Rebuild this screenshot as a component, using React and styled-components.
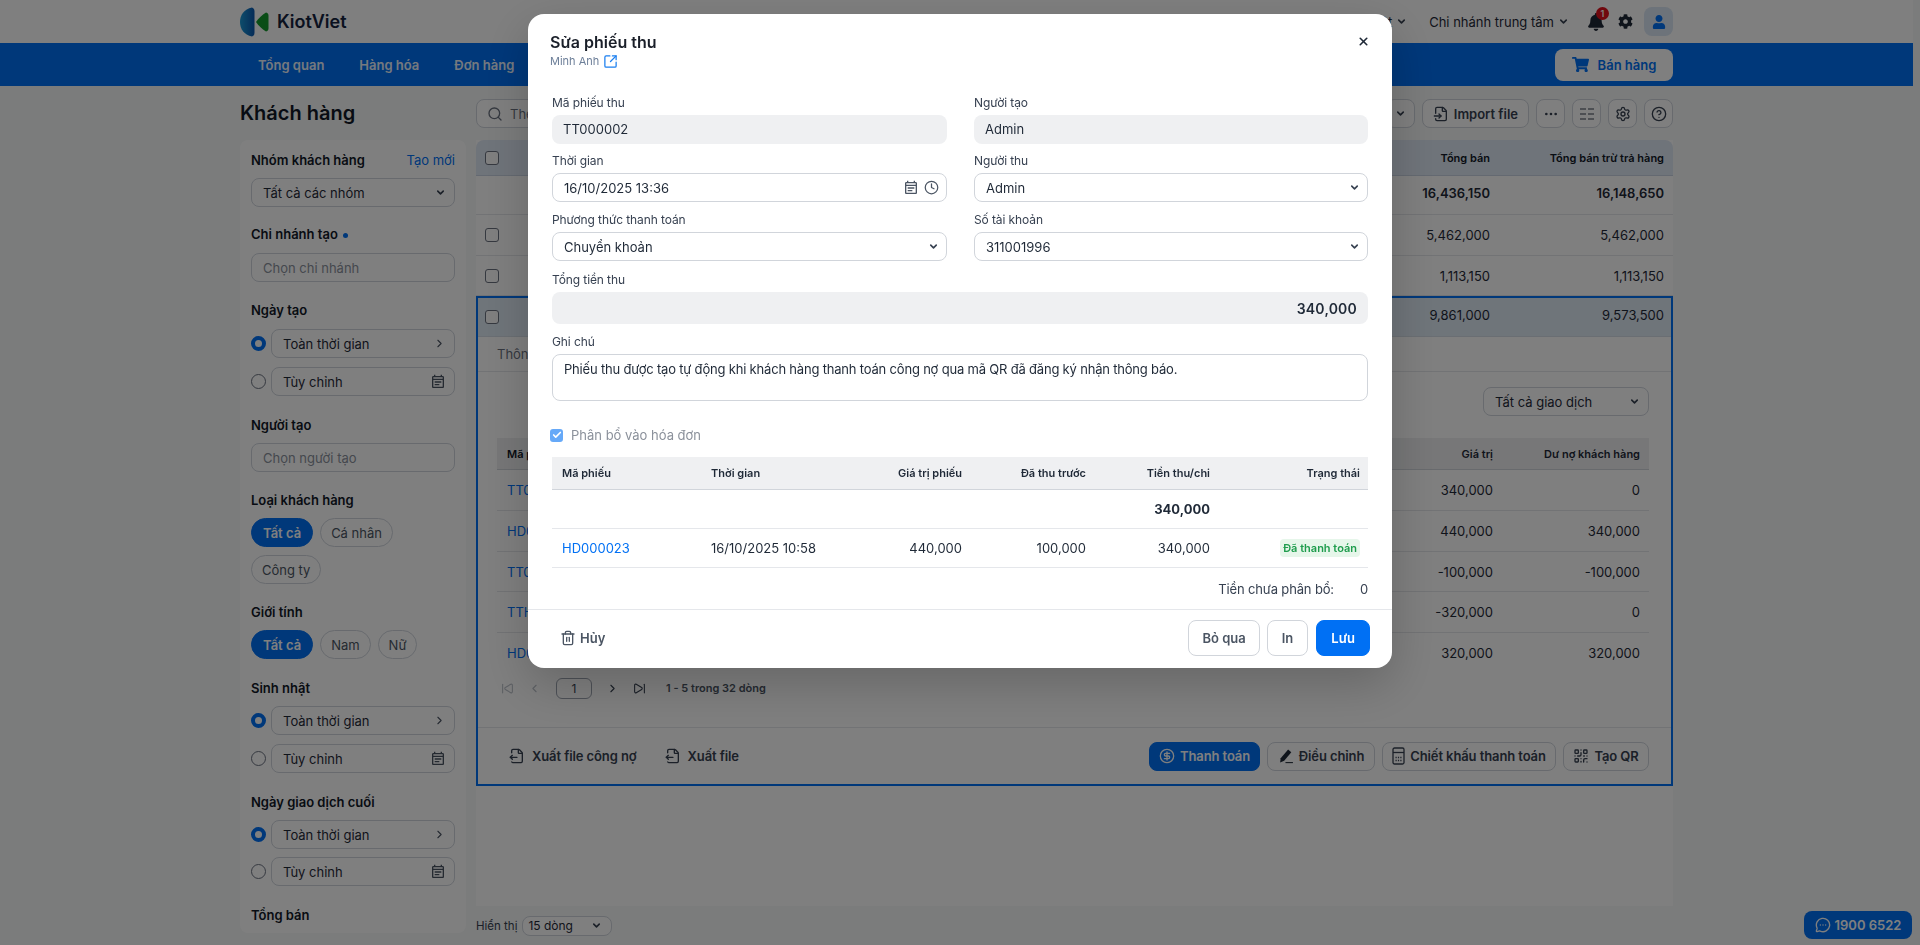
import React from 'react';
import styled, { createGlobalStyle } from 'styled-components';
import {
  Search, ChevronDown, ChevronRight, ChevronLeft, X, SquareArrowOutUpRight, Trash2, FileInput, FileOutput,
  Ellipsis, Settings, CircleHelp, CircleDollarSign, QrCode, MessageCircleMore, SkipBack, SkipForward, Check, Clock,
} from 'lucide-react';
import { FaBell, FaCog, FaUser, FaShoppingCart } from 'react-icons/fa';
import { MdOutlineEventNote } from 'react-icons/md';

const GlobalStyle = createGlobalStyle`
  html, body {
    margin: 0;
    height: 945px;
    overflow: hidden;
    background: #f6f8f8;
    font-family: Inter, "Noto Sans", sans-serif;
    font-size: 13px;
    color: #1f2937;
  }
  * { box-sizing: border-box; }
`;

const Page = styled.div`
  width: 1913px;
  height: 945px;
  overflow: hidden;
`;

// header
const Header = styled.header`
  height: 43px;
  background: #fff;
`;

const Inner = styled.div`
  width: 1433px;
  height: 100%;
  margin: 0 auto;
  display: flex;
  align-items: center;
`;

const Brand = styled.div`
  display: flex;
  align-items: center;
  gap: 8px;
  font-size: 18px;
  font-weight: 600;
  color: #14233f;
`;

const HeaderSide = styled.div`
  margin-left: auto;
  display: flex;
  align-items: center;
`;

const Peek = styled.span`
  width: 14px;
  height: 14px;
  border-radius: 50%;
  background: #0070f4;
  margin-right: 412px;
`;

const HeaderLink = styled.div`
  display: flex;
  align-items: center;
  gap: 4px;
  margin-right: ${(p) => p.$gap}px;
  font-size: 13px;
  color: #1f2937;
  white-space: nowrap;
`;

const BellWrap = styled.div`
  position: relative;
  display: flex;
  margin-right: 13px;
  color: #1f2937;
`;

const Badge = styled.span`
  position: absolute;
  top: -6px;
  right: -4px;
  width: 13px;
  height: 13px;
  border-radius: 50%;
  background: #e0101c;
  color: #fff;
  font-size: 9px;
  font-weight: 600;
  line-height: 13px;
  text-align: center;
`;

const UserButton = styled.div`
  width: 29px;
  height: 29px;
  margin-left: 11px;
  border-radius: 8px;
  background: #dbe6f4;
  color: #0070f4;
  display: flex;
  align-items: center;
  justify-content: center;
`;

// blue nav
const Nav = styled.nav`
  height: 43px;
  background: #0070f4;
`;

const NavItem = styled.div`
  margin-left: ${(p) => (p.$first ? 18 : 35)}px;
  font-size: 13px;
  font-weight: 600;
  color: #fff;
  opacity: 0.92;
`;

const SaleButton = styled.div`
  margin-left: auto;
  width: 118px;
  height: 32px;
  border-radius: 8px;
  background: #fff;
  color: #0070f4;
  font-size: 13px;
  font-weight: 600;
  display: flex;
  align-items: center;
  justify-content: center;
  gap: 9px;
`;

// page body
const Body = styled.div`
  width: 1433px;
  margin: 0 auto;
  display: grid;
  grid-template-columns: 226px 1197px;
  column-gap: 10px;
`;

const PageTitle = styled.h1`
  margin: 0;
  height: 54px;
  display: flex;
  align-items: center;
  font-size: 20px;
  font-weight: 600;
  color: #111827;
`;

const Sidebar = styled.aside`
  height: 793px;
  overflow: hidden;
  padding: 11px 11px 0;
  background: #fff;
  border-radius: 8px;
`;

const Section = styled.section`
  margin-bottom: ${(p) => p.$mb ?? 19}px;
`;

const SectionHead = styled.div`
  height: 18px;
  margin-bottom: ${(p) => p.$mb ?? 9}px;
  display: flex;
  align-items: center;
  justify-content: space-between;
  font-size: 13px;
  font-weight: 600;
  color: #111827;
`;

const Dot = styled.span`
  display: inline-block;
  width: 5px;
  height: 5px;
  margin-left: 5px;
  border-radius: 50%;
  background: #0070f4;
  vertical-align: middle;
`;

const NewLink = styled.span`
  font-weight: 400;
  color: #0070f4;
`;

const Field = styled.div`
  flex: 1;
  min-width: 0;
  height: 29px;
  padding: 0 8px 0 11px;
  border: 1px solid #d0d5dd;
  border-radius: 8px;
  background: ${(p) => p.$fill || '#fff'};
  display: flex;
  align-items: center;
  justify-content: space-between;
  font-size: 13px;
  color: ${(p) => (p.$muted ? '#8a919c' : '#1f2937')};
`;

const RadioRow = styled.div`
  display: flex;
  align-items: center;
  gap: 5px;
  margin-top: ${(p) => p.$next || 0}px;
`;

const Radio = styled.span`
  width: 15px;
  height: 15px;
  flex: none;
  border-radius: 50%;
  border: ${(p) => (p.$on ? '4px solid #0070f4' : '1px solid #6b7280')};
  background: #fff;
`;

const Chips = styled.div`
  display: flex;
  flex-wrap: wrap;
  gap: 8px 7px;
`;

const Chip = styled.span`
  height: 29px;
  padding: 0 ${(p) => (p.$on ? 11 : 10)}px;
  border-radius: 15px;
  border: 1px solid ${(p) => (p.$on ? '#0070f4' : '#d0d5dd')};
  background: ${(p) => (p.$on ? '#0070f4' : '#fff')};
  color: ${(p) => (p.$on ? '#fff' : '#4b5563')};
  font-weight: ${(p) => (p.$on ? 600 : 400)};
  display: flex;
  align-items: center;
`;

// main column
const Toolbar = styled.div`
  height: 54px;
  padding-top: 1px;
  display: flex;
  align-items: center;
  gap: 7px;
`;

const SearchBox = styled.div`
  flex: 1;
  height: 29px;
  padding: 0 10px;
  border: 1px solid #d0d5dd;
  border-radius: 8px;
  background: #fff;
  display: flex;
  align-items: center;
  gap: 7px;
  color: #6b7280;
`;

const ToolButton = styled.div`
  height: 29px;
  min-width: 29px;
  padding: 0 ${(p) => (p.$wide ? 10 : 0)}px;
  border: 1px solid #d0d5dd;
  border-radius: 8px;
  background: #fff;
  display: flex;
  align-items: center;
  justify-content: center;
  gap: 5px;
  font-weight: 600;
  color: #374151;
`;

const Panel = styled.main`
  height: 766px;
  background: #fff;
`;

const TableHead = styled.div`
  height: 36px;
  display: grid;
  grid-template-columns: 46px 1fr 170px 174px;
  align-items: center;
  padding-right: 9px;
  background: #dfe8f5;
  border-radius: 8px 8px 0 0;
  border-bottom: 1px solid #c9d3e2;
  font-size: 11px;
  font-weight: 600;
  color: #111827;
  text-align: right;
`;

const Row = styled.div`
  height: ${(p) => p.$h}px;
  display: grid;
  grid-template-columns: 46px 1fr 170px 174px;
  align-items: center;
  padding-right: 9px;
  padding-bottom: ${(p) => (p.$bold ? 4 : 0)}px;
  border-bottom: 1px solid #e5e7eb;
  text-align: right;
  font-weight: ${(p) => (p.$bold ? 600 : 400)};
`;

const SelectedWrap = styled.div`
  height: 490px;
  border: 2px solid #0070f4;
`;

const SelectedRow = styled.div`
  height: 39px;
  display: grid;
  grid-template-columns: 44px 1fr 170px 174px;
  align-items: center;
  padding-right: 7px;
  padding-bottom: 4px;
  background: #dfeaf5;
  border-bottom: 1px solid #d5dde6;
  text-align: right;
`;

const CheckBox = styled.span`
  justify-self: start;
  width: 14px;
  height: 14px;
  margin-left: ${(p) => p.$left}px;
  margin-top: ${(p) => p.$top || 0}px;
  border: 1px solid #6b7280;
  border-radius: 3px;
  background: #fff;
`;

const TabBar = styled.div`
  height: 35px;
  padding-left: 19px;
  display: flex;
  align-items: center;
  border-bottom: 1px solid #e5e7eb;
  color: #6b7280;
`;

const TabBody = styled.div`
  padding: 15px 22px 0 19px;
`;

const FilterRow = styled.div`
  display: flex;
  justify-content: flex-end;
  margin-bottom: 22px;
`;

const FilterSelect = styled(Field)`
  flex: none;
  width: 166px;
`;

const InnerRow = styled.div`
  height: ${(p) => p.$h}px;
  display: grid;
  grid-template-columns: 1fr 200px 147px;
  align-items: center;
  padding-left: 10px;
  padding-right: 9px;
  background: ${(p) => (p.$head ? '#eeeff1' : 'transparent')};
  border-bottom: 1px solid ${(p) => (p.$head ? '#d1d5db' : p.$last ? 'transparent' : '#e5e7eb')};
  font-size: ${(p) => (p.$head ? 11 : 13)}px;
  font-weight: ${(p) => (p.$head ? 600 : 400)};
  text-align: right;
`;

const CodeCell = styled.span`
  text-align: left;
  color: ${(p) => (p.$head ? '#111827' : '#0070f4')};
`;

const Pager = styled.div`
  height: 53px;
  padding-bottom: 25px;
  display: flex;
  align-items: center;
  color: #374151;
`;

const PagerIcon = styled.span`
  display: flex;
  margin-left: ${(p) => p.$left}px;
  color: ${(p) => (p.$off ? '#bcc1c9' : '#374151')};
`;

const PageBox = styled.span`
  width: 36px;
  height: 21px;
  margin-left: 15px;
  border: 1px solid #9ca3af;
  border-radius: 6px;
  display: flex;
  align-items: center;
  justify-content: center;
  font-size: 12px;
`;

const PagerInfo = styled.span`
  margin-left: 20px;
  font-size: 11px;
  font-weight: 600;
  color: #4b5563;
`;

const PanelFoot = styled.div`
  height: 57px;
  padding: 0 22px 0 31px;
  border-top: 1px solid #e5e7eb;
  display: flex;
  align-items: center;
  gap: 7px;
`;

const GhostAction = styled.div`
  display: flex;
  align-items: center;
  gap: 7px;
  margin-right: ${(p) => p.$gap || 0}px;
  font-weight: 600;
  color: #374151;
  letter-spacing: -0.1px;
`;

const FootButton = styled.div`
  width: ${(p) => p.$w}px;
  height: 29px;
  border-radius: 8px;
  border: 1px solid ${(p) => (p.$primary ? '#0070f4' : '#d0d5dd')};
  background: ${(p) => (p.$primary ? '#0070f4' : '#fff')};
  color: ${(p) => (p.$primary ? '#fff' : '#374151')};
  margin-left: ${(p) => (p.$push ? 'auto' : 0)};
  display: flex;
  align-items: center;
  justify-content: center;
  gap: 5px;
  font-weight: 600;
  letter-spacing: -0.1px;
  white-space: nowrap;
`;

const PageSize = styled.div`
  height: 39px;
  display: flex;
  align-items: center;
  gap: 5px;
  font-size: 11.5px;
  color: #374151;
`;

const SizeSelect = styled(Field)`
  flex: none;
  width: 90px;
  height: 20px;
  padding: 0 9px 0 5px;
  font-size: 12px;
`;

const Hotline = styled.div`
  position: fixed;
  left: 1804px;
  top: 911px;
  width: 108px;
  height: 28px;
  border-radius: 8px;
  background: #0070f4;
  color: #fff;
  font-weight: 600;
  display: flex;
  align-items: center;
  justify-content: center;
  gap: 4px;
`;

// modal
const Overlay = styled.div`
  position: fixed;
  inset: 0;
  padding-top: 14px;
  background: rgba(0, 0, 0, 0.5);
  display: flex;
  justify-content: center;
  align-items: flex-start;
`;

const Modal = styled.div`
  width: 864px;
  height: 654px;
  border-radius: 16px;
  background: #fff;
  box-shadow: 0 16px 48px rgba(0, 0, 0, 0.2);
`;

const ModalHead = styled.div`
  height: 81px;
  padding: 18px 22px 0 24px;
  display: flex;
  justify-content: space-between;
`;

const ModalTitle = styled.div`
  font-size: 16px;
  font-weight: 600;
  line-height: 20px;
  color: #1a1f29;
  margin-left: -2px;
`;

const ModalSub = styled.div`
  height: 16px;
  margin: 1px 0 0 -2px;
  display: flex;
  align-items: center;
  gap: 4px;
  font-size: 11px;
  color: #6d7f99;
`;

const CloseWrap = styled.div`
  margin-top: 3px;
  color: #1f2937;
`;

const ModalBody = styled.div`
  padding: 0 24px;
`;

const FormGrid = styled.div`
  display: grid;
  grid-template-columns: 395px 394px;
  column-gap: 27px;
`;

const FormGroup = styled.div`
  grid-column: ${(p) => (p.$full ? '1 / -1' : 'auto')};
  margin-bottom: ${(p) => p.$mb ?? 9}px;
`;

const Label = styled.label`
  display: block;
  height: 16px;
  margin-bottom: 4px;
  font-size: 12px;
  line-height: 16px;
  letter-spacing: -0.1px;
  color: #374151;
`;

const ReadOnly = styled.div`
  height: ${(p) => p.$h || 29}px;
  padding: 0 11px ${(p) => (p.$right ? 0 : 2)}px;
  border-radius: 8px;
  background: #eff0f2;
  display: flex;
  align-items: center;
  justify-content: ${(p) => (p.$right ? 'flex-end' : 'flex-start')};
  font-size: ${(p) => (p.$right ? 14 : 13)}px;
  font-weight: ${(p) => (p.$right ? 600 : 400)};
  letter-spacing: ${(p) => (p.$right ? 0.2 : 0)}px;
  color: #1f2937;
`;

const FormField = styled(Field)`
  border-color: #d1d5db;
  padding: 0 7px 0 11px;
`;

const IconPair = styled.span`
  display: flex;
  align-items: center;
  gap: 5px;
  color: #4b5563;
`;

const NoteBox = styled.div`
  height: 47px;
  padding: 5px 11px;
  border: 1px solid #d1d5db;
  border-radius: 8px;
  font-size: 13px;
  line-height: 18px;
  letter-spacing: -0.19px;
`;

const Allocate = styled.div`
  margin: 25px 0 13px -2px;
  height: 18px;
  display: flex;
  align-items: center;
  gap: 8px;
  color: #8b919b;
`;

const AllocateBox = styled.span`
  width: 13px;
  height: 13px;
  border-radius: 3px;
  background: #66a9f8;
  color: #fff;
  display: flex;
  align-items: center;
  justify-content: center;
`;

const AllocRow = styled.div`
  height: ${(p) => p.$h}px;
  display: grid;
  grid-template-columns: 149px 149px 120px 124px 124px 150px;
  align-items: center;
  background: ${(p) => (p.$head ? '#eff0f2' : 'transparent')};
  border-bottom: 1px solid ${(p) => (p.$head ? '#d1d5db' : '#e5e7eb')};
  font-size: ${(p) => (p.$head ? 11 : 13)}px;
  font-weight: ${(p) => (p.$head ? 600 : 400)};
`;

const AllocCell = styled.span`
  padding: ${(p) => (p.$right ? '0 8px 0 0' : '0 0 0 10px')};
  text-align: ${(p) => (p.$right ? 'right' : 'left')};
  color: ${(p) => (p.$link ? '#0070f4' : 'inherit')};
  font-weight: ${(p) => (p.$bold ? 700 : 'inherit')};
`;

const StatusBadge = styled.span`
  display: inline-block;
  height: 18px;
  padding: 0 3px;
  border-radius: 4px;
  background: #e6f6ea;
  color: #1f9d4d;
  font-size: 11px;
  font-weight: 600;
  line-height: 18px;
`;

const Remain = styled.div`
  height: 41px;
  display: flex;
  align-items: center;
  justify-content: flex-end;
  gap: 26px;
  letter-spacing: -0.15px;
  color: #374151;
`;

const ModalFoot = styled.div`
  height: 59px;
  padding: 0 22px 2px 32px;
  border-top: 1px solid #e5e7eb;
  display: flex;
  align-items: center;
  gap: 7px;
`;

const CancelLink = styled.div`
  margin-right: auto;
  display: flex;
  align-items: center;
  gap: 4px;
  font-weight: 600;
  color: #4b5563;
`;

const ModalButton = styled.div`
  height: 36px;
  padding: 0 ${(p) => p.$pad}px;
  margin-left: ${(p) => p.$ml || 0}px;
  border-radius: 8px;
  border: 1px solid ${(p) => (p.$primary ? '#0070f4' : '#d1d5db')};
  background: ${(p) => (p.$primary ? '#0070f4' : '#fff')};
  color: ${(p) => (p.$primary ? '#fff' : '#4b5563')};
  display: flex;
  align-items: center;
  font-weight: 600;
`;

const Logo = () => (
  <svg width="29" height="30" viewBox="0 0 29 30">
    <defs>
      <linearGradient id="lens" x1="0" y1="0" x2="1" y2="0">
        <stop offset="0" stopColor="#1b9ad6" />
        <stop offset="1" stopColor="#0b57b0" />
      </linearGradient>
    </defs>
    <path d="M12 0.5C4 2 0 8 0 15s4 13 12 14.500c2-1 2.500-2 2.500-4V4.500c0-2-.5-3-2.500-4z" fill="url(#lens)" />
    <path d="M16 15c2-3 6-7 10-9.500 2 .5 2.500 1.500 2.500 3.500v12c0 2-.5 3-2.500 3.500C22 22 18 18 16 15z" fill="#149a2d" />
  </svg>
);

const ColumnsIcon = () => (
  <svg width="16" height="14" viewBox="0 0 16 14" fill="none" stroke="#374151" strokeWidth="1.200">
    <path d="M1 2h6M9 2h6M1 7h6M9 7h6M1 12h6M9 12h6" />
  </svg>
);

const PenIcon = () => (
  <svg width="16" height="16" viewBox="0 0 15 15" fill="#1f2937">
    <path d="M2.500 9.500 9.500 1.500l3 2.500-6.700 8L2 13.500z" />
    <path d="M7 13.200h7v1H7z" />
  </svg>
);

const TallCalculator = () => (
  <svg width="13" height="18" viewBox="0 0 13 18" fill="none" stroke="#374151" strokeWidth="1.300">
    <rect x="1" y="1" width="11" height="16" rx="1.500" />
    <path d="M1 5.500h11" />
    <path d="M3.500 10.500h6M3.500 13.500h6" strokeDasharray="1.200 1.200" />
  </svg>
);

const CalIcon = () => <MdOutlineEventNote size={16} color="#4b5563" />;
const Caret = () => <ChevronDown size={11} strokeWidth={3.5} color="#374151" />;

const TimeChoice = ({ rowGap = 9 }) => (
  <>
    <RadioRow>
      <Radio $on />
      <Field>Toàn thời gian<ChevronRight size={13} color="#4b5563" /></Field>
    </RadioRow>
    <RadioRow $next={rowGap}>
      <Radio />
      <Field>Tùy chỉnh<CalIcon /></Field>
    </RadioRow>
  </>
);

const ledger = [
  { code: 'TT000002', value: '340,000', debt: '0', h: 41 },
  { code: 'HD000023', value: '440,000', debt: '340,000', h: 41 },
  { code: 'TT000001', value: '-100,000', debt: '-100,000', h: 40 },
  { code: 'TTHD000002', value: '-320,000', debt: '0', h: 41 },
  { code: 'HD000022', value: '320,000', debt: '320,000', h: 41, last: true },
];

export default function App() {
  return (
    <>
      <GlobalStyle />
      <Page>
        <Header>
          <Inner>
            <Brand><Logo />KiotViet</Brand>
            <HeaderSide>
              <Peek />
              <HeaderLink $gap={22}>Tiếng Việt<Caret /></HeaderLink>
              <HeaderLink $gap={18}>Chi nhánh trung tâm<Caret /></HeaderLink>
              <BellWrap><FaBell size={18} /><Badge>1</Badge></BellWrap>
              <FaCog size={15} color="#1f2937" />
              <UserButton><FaUser size={14} /></UserButton>
            </HeaderSide>
          </Inner>
        </Header>
        <Nav>
          <Inner>
            <NavItem $first>Tổng quan</NavItem>
            <NavItem>Hàng hóa</NavItem>
            <NavItem>Đơn hàng</NavItem>
            <SaleButton><FaShoppingCart size={17} />Bán hàng</SaleButton>
          </Inner>
        </Nav>
        <Body>
          <div>
            <PageTitle>Khách hàng</PageTitle>
            <Sidebar>
              <Section $mb={18}>
                <SectionHead>Nhóm khách hàng<NewLink>Tạo mới</NewLink></SectionHead>
                <Field>Tất cả các nhóm<Caret /></Field>
              </Section>
              <Section>
                <SectionHead $mb={10}><span>Chi nhánh tạo<Dot /></span></SectionHead>
                <Field $muted>Chọn chi nhánh</Field>
              </Section>
              <Section $mb={20}>
                <SectionHead $mb={10}>Ngày tạo</SectionHead>
                <TimeChoice />
              </Section>
              <Section>
                <SectionHead>Người tạo</SectionHead>
                <Field $muted>Chọn người tạo</Field>
              </Section>
              <Section>
                <SectionHead>Loại khách hàng</SectionHead>
                <Chips>
                  <Chip $on>Tất cả</Chip>
                  <Chip>Cá nhân</Chip>
                  <Chip>Công ty</Chip>
                </Chips>
              </Section>
              <Section $mb={20}>
                <SectionHead>Giới tính</SectionHead>
                <Chips>
                  <Chip $on>Tất cả</Chip>
                  <Chip>Nam</Chip>
                  <Chip>Nữ</Chip>
                </Chips>
              </Section>
              <Section $mb={20}>
                <SectionHead>Sinh nhật</SectionHead>
                <TimeChoice />
              </Section>
              <Section $mb={20}>
                <SectionHead>Ngày giao dịch cuối</SectionHead>
                <TimeChoice rowGap={8} />
              </Section>
              <Section>
                <SectionHead>Tổng bán</SectionHead>
              </Section>
            </Sidebar>
          </div>
          <div>
            <Toolbar>
              <SearchBox><Search size={16} />Theo mã</SearchBox>
              <ToolButton><Caret /></ToolButton>
              <ToolButton $wide><FileInput size={16} />Import file</ToolButton>
              <ToolButton><Ellipsis size={16} /></ToolButton>
              <ToolButton><ColumnsIcon /></ToolButton>
              <ToolButton><Settings size={16} /></ToolButton>
              <ToolButton><CircleHelp size={16} /></ToolButton>
            </Toolbar>
            <Panel>
              <TableHead>
                <CheckBox $left={9} />
                <span />
                <span>Tổng bán</span>
                <span>Tổng bán trừ trả hàng</span>
              </TableHead>
              <Row $h={39} $bold>
                <span />
                <span />
                <span>16,436,150</span>
                <span>16,148,650</span>
              </Row>
              <Row $h={41}>
                <CheckBox $left={9} />
                <span />
                <span>5,462,000</span>
                <span>5,462,000</span>
              </Row>
              <Row $h={40}>
                <CheckBox $left={9} />
                <span />
                <span>1,113,150</span>
                <span>1,113,150</span>
              </Row>
              <SelectedWrap>
                <SelectedRow>
                  <CheckBox $left={7} $top={4} />
                  <span />
                  <span>9,861,000</span>
                  <span>9,573,500</span>
                </SelectedRow>
                <TabBar>Thông tin</TabBar>
                <TabBody>
                  <FilterRow>
                    <FilterSelect>Tất cả giao dịch<Caret /></FilterSelect>
                  </FilterRow>
                  <InnerRow $h={32} $head>
                    <CodeCell $head>Mã phiếu</CodeCell>
                    <span>Giá trị</span>
                    <span>Dư nợ khách hàng</span>
                  </InnerRow>
                  {ledger.map((item) => (
                    <InnerRow key={item.code} $h={item.h} $last={item.last}>
                      <CodeCell>{item.code}</CodeCell>
                      <span>{item.value}</span>
                      <span>{item.debt}</span>
                    </InnerRow>
                  ))}
                  <Pager>
                    <PagerIcon $left={4} $off><SkipBack size={13} /></PagerIcon>
                    <PagerIcon $left={14} $off><ChevronLeft size={13} /></PagerIcon>
                    <PageBox>1</PageBox>
                    <PagerIcon $left={14}><ChevronRight size={13} /></PagerIcon>
                    <PagerIcon $left={14}><SkipForward size={13} /></PagerIcon>
                    <PagerInfo>1 - 5 trong 32 dòng</PagerInfo>
                  </Pager>
                </TabBody>
                <PanelFoot>
                  <GhostAction $gap={21}><FileOutput size={16} />Xuất file công nợ</GhostAction>
                  <GhostAction><FileOutput size={16} />Xuất file</GhostAction>
                  <FootButton $w={111} $primary $push><CircleDollarSign size={16} />Thanh toán</FootButton>
                  <FootButton $w={108}><PenIcon />Điều chỉnh</FootButton>
                  <FootButton $w={174}><TallCalculator />Chiết khấu thanh toán</FootButton>
                  <FootButton $w={86}><QrCode size={16} />Tạo QR</FootButton>
                </PanelFoot>
              </SelectedWrap>
            </Panel>
            <PageSize>
              Hiển thị
              <SizeSelect>15 dòng<Caret /></SizeSelect>
            </PageSize>
          </div>
        </Body>
      </Page>
      <Hotline><MessageCircleMore size={16} />1900 6522</Hotline>
      <Overlay>
        <Modal>
          <ModalHead>
            <div>
              <ModalTitle>Sửa phiếu thu</ModalTitle>
              <ModalSub>Minh Anh<SquareArrowOutUpRight size={15} color="#1a7ff0" /></ModalSub>
            </div>
            <CloseWrap><X size={13} strokeWidth={3} /></CloseWrap>
          </ModalHead>
          <ModalBody>
            <FormGrid>
              <FormGroup>
                <Label>Mã phiếu thu</Label>
                <ReadOnly>TT000002</ReadOnly>
              </FormGroup>
              <FormGroup>
                <Label>Người tạo</Label>
                <ReadOnly>Admin</ReadOnly>
              </FormGroup>
              <FormGroup $mb={10}>
                <Label>Thời gian</Label>
                <FormField>
                  16/10/2025 13:36
                  <IconPair><CalIcon /><Clock size={15} /></IconPair>
                </FormField>
              </FormGroup>
              <FormGroup $mb={10}>
                <Label>Người thu</Label>
                <FormField>Admin<Caret /></FormField>
              </FormGroup>
              <FormGroup $mb={11}>
                <Label>Phương thức thanh toán</Label>
                <FormField>Chuyển khoản<Caret /></FormField>
              </FormGroup>
              <FormGroup $mb={11}>
                <Label>Số tài khoản</Label>
                <FormField>311001996<Caret /></FormField>
              </FormGroup>
              <FormGroup $full $mb={10}>
                <Label>Tổng tiền thu</Label>
                <ReadOnly $h={32} $right>340,000</ReadOnly>
              </FormGroup>
              <FormGroup $full $mb={0}>
                <Label>Ghi chú</Label>
                <NoteBox>Phiếu thu được tạo tự động khi khách hàng thanh toán công nợ qua mã QR đã đăng ký nhận thông báo.</NoteBox>
              </FormGroup>
            </FormGrid>
            <Allocate>
              <AllocateBox><Check size={10} strokeWidth={4} /></AllocateBox>
              Phân bổ vào hóa đơn
            </Allocate>
            <AllocRow $h={33} $head>
              <AllocCell>Mã phiếu</AllocCell>
              <AllocCell>Thời gian</AllocCell>
              <AllocCell $right>Giá trị phiếu</AllocCell>
              <AllocCell $right>Đã thu trước</AllocCell>
              <AllocCell $right>Tiền thu/chi</AllocCell>
              <AllocCell $right>Trạng thái</AllocCell>
            </AllocRow>
            <AllocRow $h={39}>
              <AllocCell />
              <AllocCell />
              <AllocCell $right />
              <AllocCell $right />
              <AllocCell $right $bold>340,000</AllocCell>
              <AllocCell $right />
            </AllocRow>
            <AllocRow $h={39}>
              <AllocCell $link>HD000023</AllocCell>
              <AllocCell>16/10/2025 10:58</AllocCell>
              <AllocCell $right>440,000</AllocCell>
              <AllocCell $right>100,000</AllocCell>
              <AllocCell $right>340,000</AllocCell>
              <AllocCell $right><StatusBadge>Đã thanh toán</StatusBadge></AllocCell>
            </AllocRow>
            <Remain><span>Tiền chưa phân bổ:</span><span>0</span></Remain>
          </ModalBody>
          <ModalFoot>
            <CancelLink><Trash2 size={16} />Hủy</CancelLink>
            <ModalButton $pad={13}>Bỏ qua</ModalButton>
            <ModalButton $pad={14}>In</ModalButton>
            <ModalButton $primary $pad={14} $ml={1}>Lưu</ModalButton>
          </ModalFoot>
        </Modal>
      </Overlay>
    </>
  );
}
